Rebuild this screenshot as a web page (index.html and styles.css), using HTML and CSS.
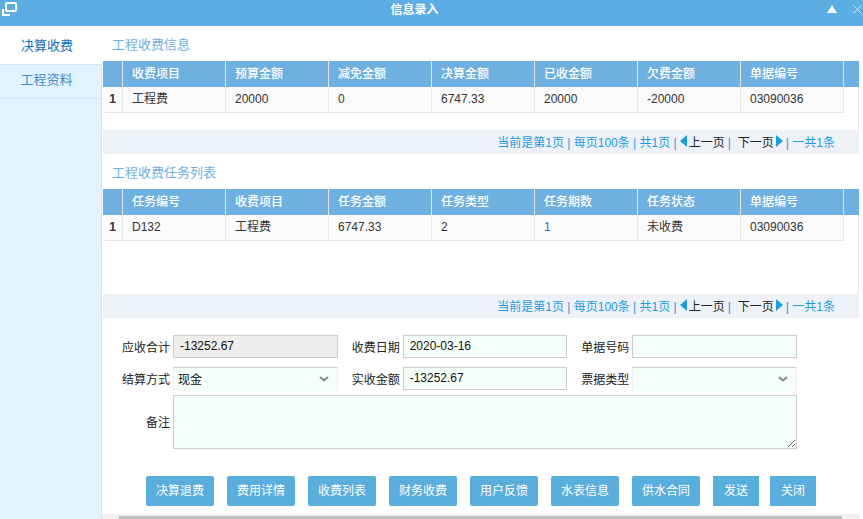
FILE: index.html
```html
<!DOCTYPE html>
<html lang="zh-CN">
<head>
<meta charset="utf-8">
<title>信息录入</title>
<link rel="stylesheet" href="styles.css">
</head>
<body>
<header class="titlebar">
  <svg class="window-icon" viewBox="0 0 18 18" aria-hidden="true">
    <rect x="6" y="3" width="10" height="8" rx="1"/>
    <path d="M3 9V15H10"/>
  </svg>
  <h1 class="window-title">信息录入</h1>
  <div class="window-tools">
    <button type="button" class="tool" aria-label="最大化"><svg viewBox="0 0 10 8" width="10" height="8"><path class="solid" d="M5 0L10 8H0Z"/></svg></button>
    <button type="button" class="tool" aria-label="关闭窗口"><svg viewBox="0 0 9 9" width="9" height="9"><path class="cross" d="M.5 .5L8.500 8.500M8.500 .5L.5 8.500"/></svg></button>
  </div>
</header>
<div class="layout">
  <nav class="sidebar">
    <a class="tab active" href="#settle">决算收费</a>
    <a class="tab" href="#docs">工程资料</a>
  </nav>
  <main class="content" id="settle">
    <h2 class="section-title">工程收费信息</h2>
    <div class="grid-body short">
      <table>
        <colgroup><col class="col-num"><col span="7"><col class="col-end"></colgroup>
        <thead><tr><th></th><th>收费项目</th><th>预算金额</th><th>减免金额</th><th>决算金额</th><th>已收金额</th><th>欠费金额</th><th>单据编号</th><th></th></tr></thead>
        <tbody><tr><td class="num">1</td><td>工程费</td><td>20000</td><td>0</td><td>6747.33</td><td>20000</td><td>-20000</td><td>03090036</td><td class="end"></td></tr></tbody>
      </table>
    </div>
    <div class="pager">
      <span>当前是第1页 | 每页100条 | 共1页 |</span>
      <a href="#prev"><svg viewBox="0 0 7 12" width="7" height="12"><path d="M7 0V12L0 6Z"/></svg><span>上一页</span></a>
      <span class="bar">|</span>
      <a href="#next"><span>下一页</span><svg viewBox="0 0 7 12" width="7" height="12"><path d="M0 0V12L7 6Z"/></svg></a>
      <span class="total">| 一共1条</span>
    </div>

    <h2 class="section-title">工程收费任务列表</h2>
    <div class="grid-body tall">
      <table>
        <colgroup><col class="col-num"><col span="7"><col class="col-end"></colgroup>
        <thead><tr><th></th><th>任务编号</th><th>收费项目</th><th>任务金额</th><th>任务类型</th><th>任务期数</th><th>任务状态</th><th>单据编号</th><th></th></tr></thead>
        <tbody><tr><td class="num">1</td><td>D132</td><td>工程费</td><td>6747.33</td><td>2</td><td><a class="cell-link" href="#period">1</a></td><td>未收费</td><td>03090036</td><td class="end"></td></tr></tbody>
      </table>
    </div>
    <div class="pager">
      <span>当前是第1页 | 每页100条 | 共1页 |</span>
      <a href="#prev"><svg viewBox="0 0 7 12" width="7" height="12"><path d="M7 0V12L0 6Z"/></svg><span>上一页</span></a>
      <span class="bar">|</span>
      <a href="#next"><span>下一页</span><svg viewBox="0 0 7 12" width="7" height="12"><path d="M0 0V12L7 6Z"/></svg></a>
      <span class="total">| 一共1条</span>
    </div>

    <form class="fee-form">
      <div class="fields">
        <label for="total">应收合计</label>
        <input id="total" type="text" value="-13252.67" readonly>
        <label for="date">收费日期</label>
        <input id="date" type="text" value="2020-03-16">
        <label for="billno">单据号码</label>
        <input id="billno" type="text">
        <label for="method">结算方式</label>
        <div class="select">
          <select id="method"><option>现金</option></select>
          <svg viewBox="0 0 10 6" aria-hidden="true"><path d="M1 1L5 4.500L9 1"/></svg>
        </div>
        <label for="paid">实收金额</label>
        <input id="paid" type="text" value="-13252.67">
        <label for="billtype">票据类型</label>
        <div class="select">
          <select id="billtype"><option></option></select>
          <svg viewBox="0 0 10 6" aria-hidden="true"><path d="M1 1L5 4.500L9 1"/></svg>
        </div>
        <label for="remark" class="remark-label">备注</label>
        <textarea id="remark"></textarea>
      </div>
      <div class="actions">
        <button type="button">决算退费</button>
        <button type="button">费用详情</button>
        <button type="button">收费列表</button>
        <button type="button">财务收费</button>
        <button type="button">用户反馈</button>
        <button type="button">水表信息</button>
        <button type="button">供水合同</button>
        <div class="final">
          <button type="button">发送</button>
          <button type="button">关闭</button>
        </div>
      </div>
    </form>
    <div class="scrollbar"><div class="thumb"></div></div>
  </main>
</div>
</body>
</html>
```
FILE: styles.css
```css
* {
  box-sizing: border-box;
}

body {
  margin: 0;
  min-height: 100vh;
  display: flex;
  flex-direction: column;
  background: #fff;
  color: #333;
  font: 12px/20px "Liberation Sans", "Noto Sans CJK SC", sans-serif;
}

a {
  text-decoration: none;
}

input,
select,
textarea,
button {
  margin: 0;
  font: inherit;
}

.titlebar {
  display: flex;
  align-items: flex-start;
  height: 26px;
  background: #5dade5;
  color: #fff;
}

.window-icon {
  width: 18px;
  height: 18px;
  fill: none;
  stroke: #fff;
  stroke-width: 2;
}

.window-title {
  flex: 1;
  margin: 0;
  padding-right: 16px;
  text-align: center;
  font-size: 12px;
  line-height: 20px;
}

.window-tools {
  display: flex;
  align-items: center;
  gap: 16px;
  height: 18px;
  padding-right: 1px;
}

.tool {
  display: flex;
  padding: 0;
  border: 0;
  background: none;
}

.solid {
  fill: #fff;
}

.cross {
  fill: none;
  stroke: #d4e9f8;
}

.layout {
  flex: 1;
  display: flex;
}

.sidebar {
  width: 102px;
  flex: none;
  background: #e1f3ff;
  border-right: 1px solid #cfe5f6;
}

.tab {
  display: block;
  padding-right: 8px;
  height: 34px;
  border-bottom: 1px solid #cfe5f6;
  color: #428bca;
  font-size: 13px;
  line-height: 30px;
  text-align: center;
}

.tab.active {
  height: 39px;
  margin-right: -1px;
  background: #fff;
  color: #0c6cc0;
  line-height: 40px;
}

.content {
  flex: 1;
  min-width: 0;
  display: flex;
  flex-direction: column;
  padding: 0 4px 0 1px;
}

.section-title {
  margin: 0;
  padding: 3px 0 0 9px;
  color: #6eb1e0;
  font-size: 13px;
  font-weight: 400;
  line-height: 32px;
}

.grid-body {
  border-right: 1px solid #e6e6e6;
}

.grid-body table {
  width: calc(100% + 1px);
}

.short {
  min-height: 69px;
}

.tall {
  min-height: 105px;
}

table {
  table-layout: fixed;
  border-collapse: separate;
  border-spacing: 0;
}

.col-num {
  width: 20px;
}

.col-end {
  width: 15px;
}

th,
td {
  height: 26px;
  padding: 0 9px;
  border-right: 1px solid #e6e6e6;
  text-align: left;
  line-height: 25px;
  white-space: nowrap;
}

th {
  padding-right: 0;
  background: #6eb1e0;
  color: #fff;
  font-weight: 500;
}

th:last-child {
  border-right: 0;
}

td {
  background: #fbfbfb;
  border-bottom: 1px solid #e6e6e6;
}

td.num {
  padding: 0;
  text-align: center;
  font-weight: 700;
}

td.end {
  padding: 0;
  border: 0;
  background: none;
}

.cell-link {
  color: #2a6ebb;
}

.pager {
  display: flex;
  justify-content: flex-end;
  height: 24px;
  padding-right: 24px;
  background: #eef2f8;
  color: #1b9ce0;
  line-height: 26px;
  white-space: nowrap;
}

.pager a {
  display: flex;
  gap: 2px;
  margin-left: 3px;
  color: #222;
}

.pager svg {
  margin-top: 5px;
  fill: #1b9ce0;
}

.bar {
  padding: 0 4px 0 3px;
}

.total {
  padding-left: 3px;
}

.fee-form {
  padding: 17px 62px 8px 18px;
  color: #222;
}

.fields {
  display: grid;
  grid-template-columns: 52px 1fr 65px 1fr 65px 1fr;
  grid-template-rows: 28px 24px 54px;
  row-gap: 4px;
  align-items: start;
}

.fields label {
  padding: 2px 3px 0 0;
  line-height: 22px;
  text-align: right;
  white-space: nowrap;
}

.fields .remark-label {
  align-self: center;
}

.fields input,
.fields textarea {
  width: 100%;
  border: 1px solid #ccc;
  border-radius: 0;
  background: #f5fff9;
  color: #111;
}

.fields input {
  height: 23px;
  padding: 0 6px 1px;
}

.fields input:read-only {
  background: #efedeb;
}

.fields textarea {
  display: block;
  grid-column: 2 / -1;
  height: 54px;
  padding: 4px 6px;
  resize: both;
}

.select {
  position: relative;
}

.select select {
  display: block;
  width: 100%;
  height: 24px;
  padding: 0 20px 0 4px;
  border: 1px solid #eee;
  border-top-color: #ccc;
  border-bottom: 0;
  border-radius: 0;
  background: #f5fff9;
  color: #111;
  appearance: none;
}

.select svg {
  position: absolute;
  top: 9px;
  right: 9px;
  width: 10px;
  height: 6px;
  fill: none;
  stroke: #888;
  stroke-width: 2;
  pointer-events: none;
}

.actions {
  display: flex;
  justify-content: center;
  gap: 13px;
  margin: 27px -62px 0 -18px;
}

.actions button {
  height: 30px;
  padding: 0 10px;
  border: 0;
  border-radius: 2px;
  background: #5aaedd;
  color: #fff;
  white-space: nowrap;
}

.final {
  display: flex;
  gap: 11px;
}

.final button {
  padding: 0 11px;
  border-radius: 0;
}

.scrollbar {
  height: 5px;
  margin: auto -1px 0;
  padding: 2px 18px 0 17px;
  background: #f1f1f1;
}

.thumb {
  height: 3px;
  background: #c1c1c1;
}
```
